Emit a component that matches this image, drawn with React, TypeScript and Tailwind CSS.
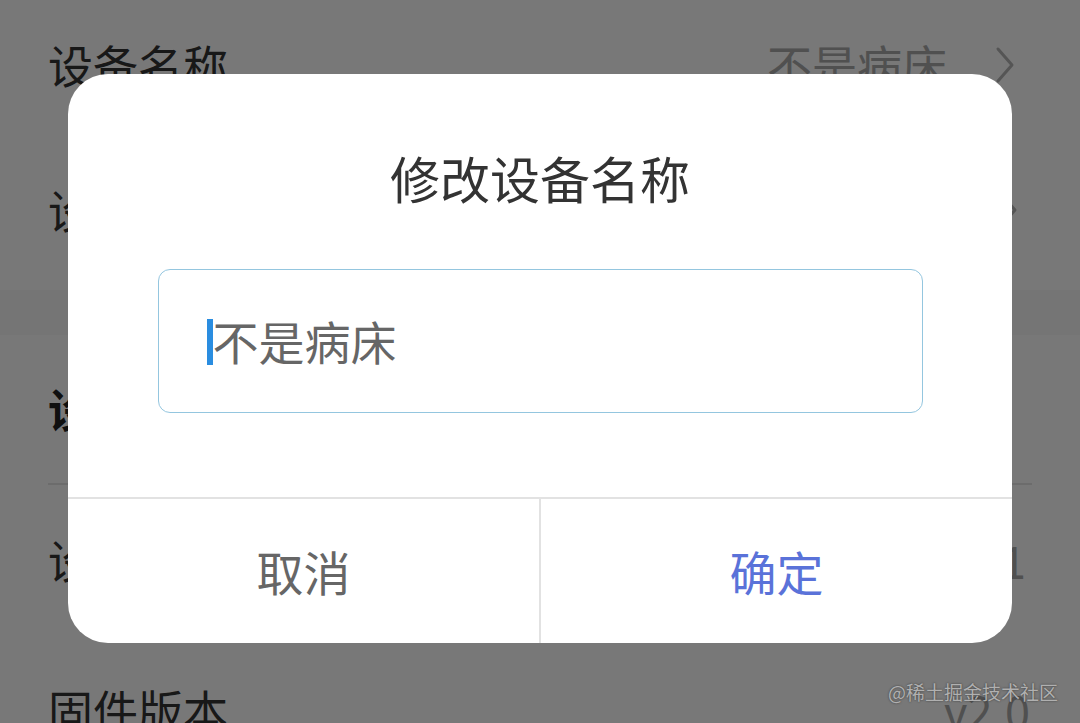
import React from 'react';

const font = { fontFamily: '"Noto Sans CJK SC", "Noto Sans", sans-serif' };

const Chevron = () => (
  <svg width="20" height="38" viewBox="0 0 20 38" fill="none" className="ml-[48px]">
    <polyline points="3,3 17,19 3,35" stroke="#b5b5b5" strokeWidth="3" strokeLinecap="round" strokeLinejoin="round" />
  </svg>
);

const App = () => {
  return (
    <div className="relative w-[1080px] h-[723px] overflow-hidden bg-white" style={font}>
      {/* page behind the dialog */}
      <div className="flex flex-col">
        <div className="h-[130px] pl-12 pr-[65px] flex items-center justify-between">
          <span className="text-[45px] text-[#333]">设备名称</span>
          <div className="flex items-center">
            <span className="text-[45px] text-[#aaa]">不是病床</span>
            <Chevron />
          </div>
        </div>
        <div className="h-[160px] pl-12 pr-[62px] flex items-center justify-between">
          <span className="text-[45px] text-[#333]">设备位置</span>
          <div className="flex items-center">
            <span className="text-[45px] text-[#aaa]">病房</span>
            <Chevron />
          </div>
        </div>
        <div className="h-[45px] bg-[#f9f9f9]" />
        <div className="h-[148px] px-12 flex items-center">
          <span className="text-[45px] font-bold text-[#222]">设备信息</span>
        </div>
        <div className="mx-12 h-[2px] bg-[#e5e5e5]" />
        <div className="h-[150px] pl-12 pr-[54px] flex items-center justify-between">
          <span className="text-[45px] text-[#333]">设备编号</span>
          <span className="text-[45px] text-[#aaa]">1</span>
        </div>
        <div className="h-[150px] pl-12 pr-[50px] flex items-center justify-between">
          <span className="text-[45px] text-[#333]">固件版本</span>
          <span className="text-[45px] text-[#aaa]">v2.0</span>
        </div>
      </div>

      {/* dim overlay + dialog */}
      <div className="absolute inset-0 bg-black/[0.53] flex justify-center items-start pt-[74px]">
        <div className="w-[944px] h-[569px] bg-white rounded-[40px] flex flex-col overflow-hidden">
          <div className="h-[423px] flex flex-col items-center">
            <div className="h-[195px] w-full flex items-center justify-center pt-[10px]">
              <span className="text-[50px] leading-none text-[#333]">修改设备名称</span>
            </div>
            <div className="w-[765px] h-[144px] border border-[#94c6df] rounded-[12px] flex items-center pl-[48px]">
              <span className="w-[6px] h-[46px] bg-[#2a8de0] mt-[2px]" />
              <span className="text-[46px] leading-none text-[#666] pb-[2px]">不是病床</span>
            </div>
          </div>
          <div className="h-[2px] bg-[#e2e2e2]" />
          <div className="flex-1 flex">
            <button className="flex-1 flex items-center justify-center text-[47px] text-[#666]">取消</button>
            <div className="w-[2px] bg-[#e2e2e2]" />
            <button className="flex-1 flex items-center justify-center text-[47px] text-[#5a72d9]">确定</button>
          </div>
        </div>
      </div>

      <div className="absolute right-[22px] bottom-[22px] text-[19px] leading-none text-[#b0b0b0] [text-shadow:0_0_2px_#333]">
        @稀土掘金技术社区
      </div>
    </div>
  );
};

export default App;
